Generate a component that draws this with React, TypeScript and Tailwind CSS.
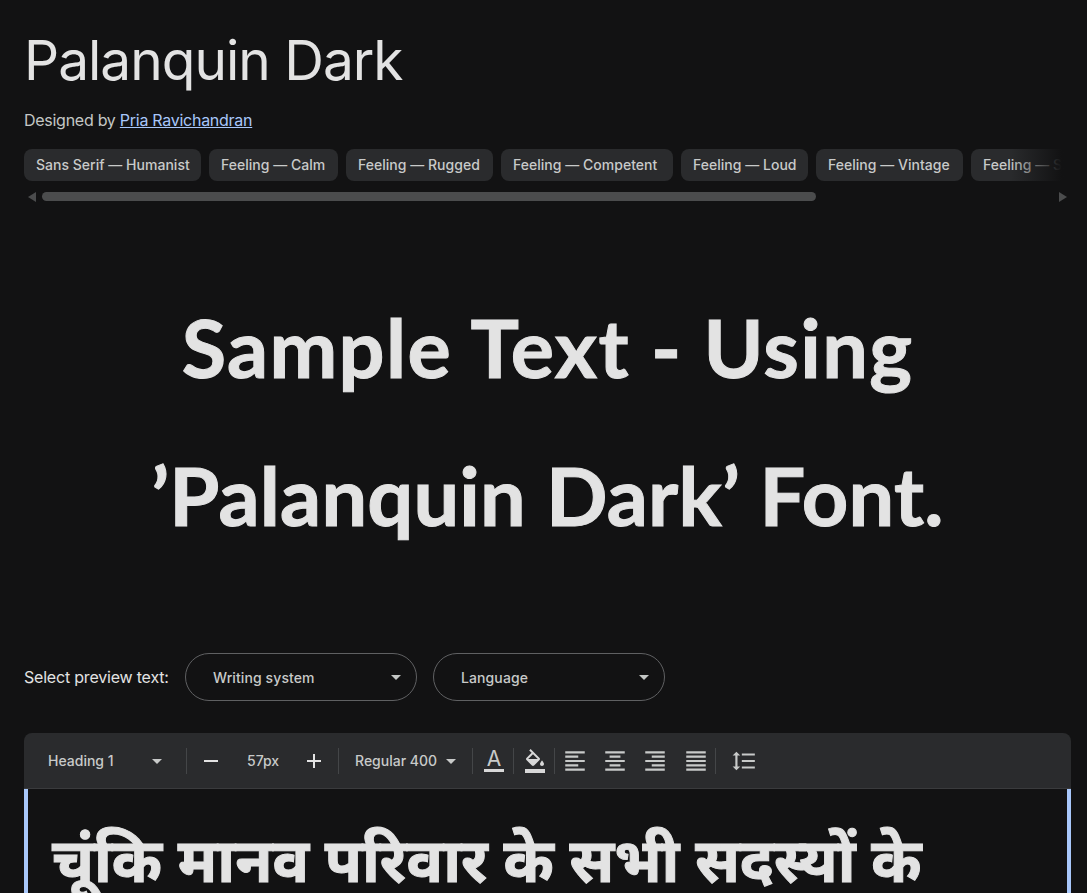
const ui = { fontFamily: 'Inter, "Noto Sans", sans-serif' };

const chips = [
  { label: 'Sans Serif — Humanist', w: 'w-[177px]' },
  { label: 'Feeling — Calm', w: 'w-[129px]' },
  { label: 'Feeling — Rugged', w: 'w-[147px]' },
  { label: 'Feeling — Competent', w: 'w-[172px]' },
  { label: 'Feeling — Loud', w: 'w-[127px]' },
  { label: 'Feeling — Vintage', w: 'w-[147px]' },
  { label: 'Feeling — St', w: 'w-[100px]' },
];

function Icon({ d, className }: { d: string; className: string }) {
  return (
    <svg viewBox="0 0 24 24" fill="currentColor" className={className}>
      <path d={d} />
    </svg>
  );
}

const CARET = 'M7 10l5 5 5-5z';

function Divider({ className }: { className: string }) {
  return <div className={`w-px h-[26px] bg-[#444648] shrink-0 ${className}`} />;
}

function Select({ label }: { label: string }) {
  return (
    <div className="w-[232px] h-12 rounded-full border border-[#5f6062] flex items-center pl-[27px] pr-[8px] justify-between">
      <span className="text-[14px] font-medium text-[#c8cac9] tracking-[0.1px]">{label}</span>
      <Icon d={CARET} className="w-6 h-6 text-[#c4c7c5]" />
    </div>
  );
}

export default function App() {
  return (
    <div className="h-[893px] overflow-hidden bg-[#121213] text-[#e3e3e3]" style={ui}>
      <div className="pl-6 pr-4">
        <h1 className="pt-[28px] text-[55px] leading-[64px] font-normal tracking-[-1px] text-[#e3e3e3]">Palanquin Dark</h1>
        <p className="mt-[16px] text-[16px] leading-[24px] text-[#c4c7c5] tracking-[-0.27px]">
          Designed by <a className="text-[#a8c7fa] underline">Pria Ravichandran</a>
        </p>

        <div className="relative mt-[17px] flex gap-2 overflow-hidden">
          {chips.map(c => (
            <div key={c.label} className={`${c.w} shrink-0 h-8 rounded-lg bg-[#2a2b2d] flex items-center pl-3 pb-px whitespace-nowrap text-[14px] font-medium text-[#c8cac9] tracking-[0.02px]`}>
              {c.label}
            </div>
          ))}
          <div className="absolute right-0 top-0 bottom-0 w-[62px] bg-gradient-to-r from-transparent to-[#121213] to-85%" />
        </div>

        <div className="mt-[10px] h-[11px] flex items-center">
          <span className="ml-1 w-0 h-0 border-y-[5px] border-y-transparent border-r-[8px] border-r-[#4b4c4d]" />
          <div className="ml-[6px] w-[774px] h-[9px] rounded-full bg-[#4b4c4d]" />
          <span className="ml-auto mr-1 w-0 h-0 border-y-[5px] border-y-transparent border-l-[8px] border-l-[#4b4c4d]" />
        </div>

        <div
          className="mt-[71px] text-center text-[81px] leading-[148px] font-bold text-[#e3e3e3] [-webkit-text-stroke:1px_#e3e3e3]"
          style={{ fontFamily: 'Lato, "Noto Sans", sans-serif' }}
        >
          <span className="tracking-[1.35px]">Sample Text - Using</span>
          <br />
          <span className="tracking-[0.2px]">’Palanquin Dark’ Font.</span>
        </div>

        <div className="mt-[84px] flex items-center">
          <span className="text-[16px] text-[#e3e3e3] tracking-[-0.2px] w-[161px] whitespace-nowrap">Select preview text:</span>
          <div className="flex gap-4">
            <Select label="Writing system" />
            <Select label="Language" />
          </div>
        </div>

        <div className="mt-8 h-[56px] bg-[#2a2b2d] rounded-t-lg border-b border-[#3a3b3d] flex items-center text-[#c8cac9] text-[14px] font-medium">
          <span className="ml-6 w-[100px]">Heading 1</span>
          <Icon d={CARET} className="w-6 h-6 -ml-[3px]" />
          <Divider className="ml-[17px]" />
          <Icon d="M19 13H5v-2h14v2z" className="w-6 h-6 ml-[12px] text-[#e3e3e3]" />
          <span className="ml-[24px] w-[55px]">57px</span>
          <Icon d="M19 13h-6v6h-2v-6H5v-2h6V5h2v6h6v2z" className="w-6 h-6 text-[#e3e3e3]" />
          <Divider className="ml-[12px]" />
          <span className="ml-4 w-[84px] whitespace-nowrap">Regular 400</span>
          <Icon d={CARET} className="w-6 h-6" />
          <Divider className="ml-[9px]" />
          <div className="ml-[11px] w-[20px] flex flex-col items-center">
            <span className="text-[21px] leading-[20px] font-normal text-[#c8cac9]">A</span>
            <span className="w-[20px] h-[3px] bg-[#d8d8d8]" />
          </div>
          <Divider className="ml-[9px]" />
          <Icon d="M16.56 8.94L7.62 0 6.21 1.41l2.38 2.38-5.15 5.15c-.59.59-.59 1.54 0 2.12l5.5 5.5c.29.29.68.44 1.06.44s.77-.15 1.06-.44l5.5-5.5c.59-.58.59-1.53 0-2.12zM5.21 10L10 5.21 14.79 10H5.21zM19 11.5s-2 2.17-2 3.5c0 1.1.9 2 2 2s2-.9 2-2c0-1.33-2-3.5-2-3.5zM2 20h20v4H2v-4z" className="w-6 h-6 ml-[9px] text-[#d8d8d8]" />
          <Divider className="ml-[7px]" />
          <Icon d="M15 15H3v2h12v-2zm0-8H3v2h12V7zM3 13h18v-2H3v2zm0 8h18v-2H3v2zM3 3v2h18V3H3z" className="w-[26px] h-[26px] ml-[7px] mt-px" />
          <Icon d="M7 15v2h10v-2H7zm-4 6h18v-2H3v2zm0-8h18v-2H3v2zm4-6v2h10V7H7zM3 3v2h18V3H3z" className="w-[26px] h-[26px] ml-[14px] mt-px" />
          <Icon d="M3 21h18v-2H3v2zm6-4h12v-2H9v2zm-6-4h18v-2H3v2zm6-4h12V7H9v2zM3 3v2h18V3H3z" className="w-[26px] h-[26px] ml-[14px] mt-px" />
          <Icon d="M3 21h18v-2H3v2zm0-4h18v-2H3v2zm0-4h18v-2H3v2zm0-4h18V7H3v2zm0-6v2h18V3H3z" className="w-[26px] h-[26px] ml-[15px] mt-px" />
          <Divider className="ml-[6px]" />
          <Icon d="M6 7h2.5L5 3.5 1.5 7H4v10H1.5L5 20.5 8.5 17H6V7zm4-2v2h12V5H10zm0 14h12v-2H10v2zm0-6h12v-2H10v2z" className="w-[26px] h-[26px] ml-[15px] mt-px" />
        </div>

        <div
          className="h-[200px] border-x-4 border-[#a8c7fa] pl-[24px] pt-[39px] text-[60.6px] leading-[80px] font-bold text-[#e3e3e3] whitespace-nowrap [-webkit-text-stroke:1px_#e3e3e3]"
          style={{ fontFamily: '"Noto Sans Devanagari", "Noto Sans", "Lohit Devanagari", sans-serif' }}
        >
          चूंकि मानव परिवार के सभी सदस्यों के
        </div>
      </div>
    </div>
  );
}
